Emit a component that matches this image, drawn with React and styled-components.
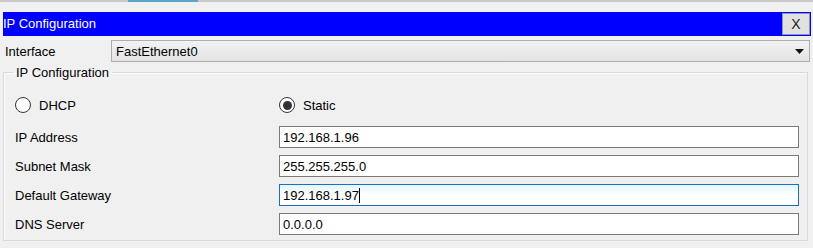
import styled, { createGlobalStyle } from "styled-components";

const GlobalStyle = createGlobalStyle`
    html, body {
        margin: 0;
        padding: 0;
        background: #f0f0f0;
    }
    body {
        font-family: "Liberation Sans", Arial, sans-serif;
        font-size: 13px;
        color: #000;
    }
`;

const fields = [
    { label: "IP Address", value: "192.168.1.96" },
    { label: "Subnet Mask", value: "255.255.255.0" },
    { label: "Default Gateway", value: "192.168.1.97", focused: true },
    { label: "DNS Server", value: "0.0.0.0" },
];

const App = () => {
    return (
        <>
            <GlobalStyle />
            <TopStrip>
                <ActiveTab />
            </TopStrip>
            <Window>
                <TitleBar>
                    <Title>IP Configuration</Title>
                    <CloseButton>X</CloseButton>
                </TitleBar>
                <InterfaceRow>
                    <RowLabel>Interface</RowLabel>
                    <Select>
                        <span>FastEthernet0</span>
                        <svg width="9" height="5" viewBox="0 0 9 5">
                            <path d="M0 0 L9 0 L4.5 5 Z" fill="#111" />
                        </svg>
                    </Select>
                </InterfaceRow>
                <Group>
                    <Legend>IP Configuration</Legend>
                    <RadioRow>
                        <RadioOption $wide>
                            <Radio />
                            DHCP
                        </RadioOption>
                        <RadioOption>
                            <Radio $checked />
                            Static
                        </RadioOption>
                    </RadioRow>
                    <Fields>
                        {fields.map((f) => (
                            <FieldRow key={f.label}>
                                <FieldLabel>{f.label}</FieldLabel>
                                <TextBox $focused={f.focused}>
                                    {f.value}
                                    {f.focused && <Caret />}
                                </TextBox>
                            </FieldRow>
                        ))}
                    </Fields>
                </Group>
            </Window>
        </>
    );
};

const TopStrip = styled.div`
    height: 10px;
    border-top: 2px solid #c9c9c9;
`;

const ActiveTab = styled.div`
    margin-left: 128px;
    margin-top: -2px;
    width: 70px;
    height: 2px;
    background: #5ba6c6;
`;

const Window = styled.div`
    padding: 0 2px 0 3px;
`;

const TitleBar = styled.div`
    display: flex;
    align-items: center;
    justify-content: space-between;
    height: 24px;
    background: #0000ff;
    color: #fff;
`;

const Title = styled.span`
    line-height: 24px;
`;

const CloseButton = styled.div`
    box-sizing: border-box;
    width: 28px;
    height: 22px;
    margin-right: 1px;
    display: flex;
    align-items: center;
    justify-content: center;
    background: #e1e1e1;
    border: 1px solid #8c95b4;
    color: #222;
    font-size: 14px;
`;

const InterfaceRow = styled.div`
    display: flex;
    align-items: center;
    margin-top: 4px;
    padding-right: 1px;
`;

const RowLabel = styled.span`
    width: 108px;
    padding-left: 2px;
    box-sizing: border-box;
`;

const Select = styled.div`
    flex: 1;
    box-sizing: border-box;
    height: 22px;
    display: flex;
    align-items: center;
    justify-content: space-between;
    padding: 0 5px 0 4px;
    background: linear-gradient(#f2f2f2, #e4e4e4);
    border: 1px solid #adadad;
`;

const Group = styled.fieldset`
    margin: 3px 3px 0 0;
    padding: 0 8px 5px 11px;
    border: 1px solid #d9d9d9;
    box-shadow: inset 1px 1px 0 #fbfbfb;
    min-width: 0;
`;

const Legend = styled.legend`
    margin-left: -2px;
    padding: 0 3px;
    line-height: 15px;
`;

const RadioRow = styled.div`
    display: flex;
    align-items: center;
    height: 16px;
    margin-top: 17px;
`;

const RadioOption = styled.label`
    display: flex;
    align-items: center;
    gap: 8px;
    width: ${(p) => (p.$wide ? "264px" : "auto")};
`;

const Radio = styled.span`
    box-sizing: border-box;
    width: 16px;
    height: 16px;
    border-radius: 50%;
    border: 1px solid #333;
    background: #fff;
    display: flex;
    align-items: center;
    justify-content: center;

    &::after {
        content: "";
        display: ${(p) => (p.$checked ? "block" : "none")};
        width: 9px;
        height: 9px;
        border-radius: 50%;
        background: #333;
    }
`;

const Fields = styled.div`
    display: flex;
    flex-direction: column;
    gap: 7px;
    margin-top: 13px;
`;

const FieldRow = styled.div`
    display: grid;
    grid-template-columns: 264px 1fr;
    align-items: center;
`;

const FieldLabel = styled.span``;

const TextBox = styled.div`
    box-sizing: border-box;
    height: 22px;
    display: flex;
    align-items: center;
    padding: 0 3px;
    background: ${(p) =>
        p.$focused ? "linear-gradient(#e3f6ff, #ffffff 55%)" : "#fff"};
    border: 1px solid ${(p) => (p.$focused ? "#1a6fc0" : "#7a7a7a")};
`;

const Caret = styled.span`
    width: 1px;
    height: 15px;
    background: #000;
`;

export default App;
